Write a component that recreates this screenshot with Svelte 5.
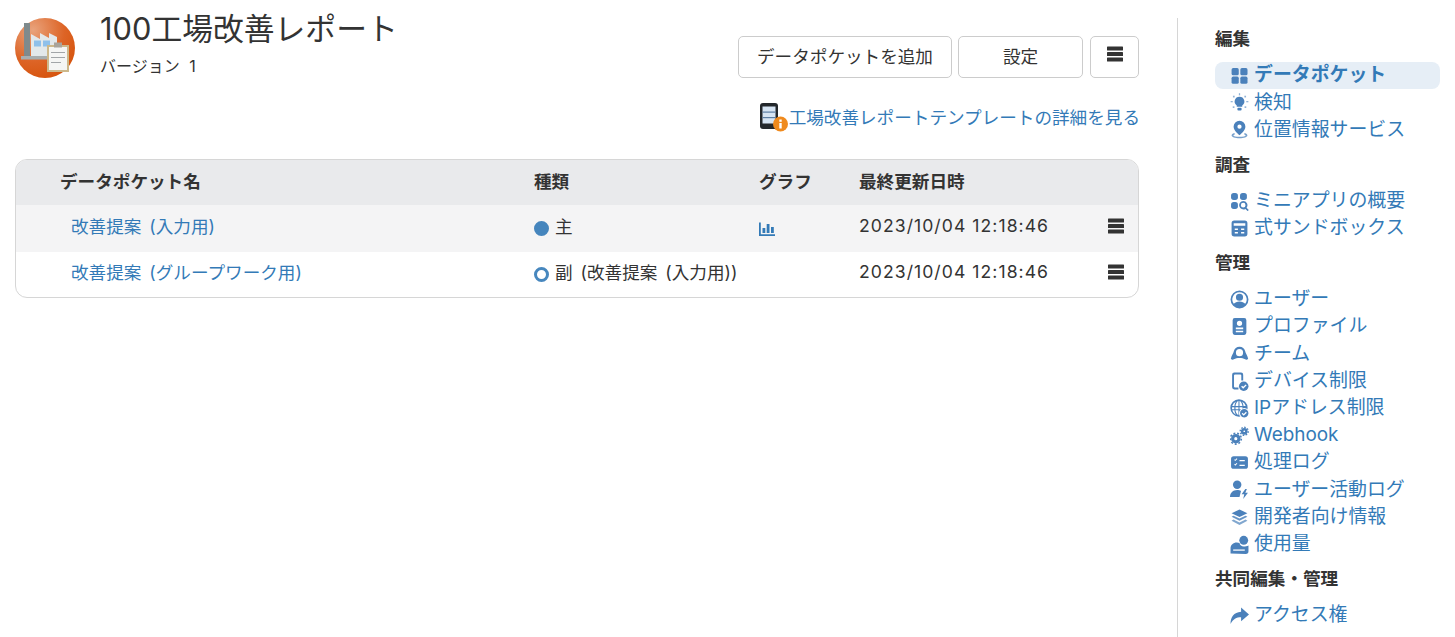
<script lang="ts">
	interface NavItem {
		label: string;
		icon: string;
		active?: boolean;
	}

	const sections: { title: string; items: NavItem[] }[] = [
		{
			title: '編集',
			items: [
				{ label: 'データポケット', icon: 'grid', active: true },
				{ label: '検知', icon: 'bulb' },
				{ label: '位置情報サービス', icon: 'pin' }
			]
		},
		{
			title: '調査',
			items: [
				{ label: 'ミニアプリの概要', icon: 'search' },
				{ label: '式サンドボックス', icon: 'calc' }
			]
		},
		{
			title: '管理',
			items: [
				{ label: 'ユーザー', icon: 'user' },
				{ label: 'プロファイル', icon: 'profile' },
				{ label: 'チーム', icon: 'team' },
				{ label: 'デバイス制限', icon: 'device' },
				{ label: 'IPアドレス制限', icon: 'globe' },
				{ label: 'Webhook', icon: 'gears' },
				{ label: '処理ログ', icon: 'log' },
				{ label: 'ユーザー活動ログ', icon: 'activity' },
				{ label: '開発者向け情報', icon: 'layers' },
				{ label: '使用量', icon: 'usage' }
			]
		},
		{
			title: '共同編集・管理',
			items: [{ label: 'アクセス権', icon: 'share' }]
		}
	];

	const icons: Record<string, string> = {
		grid: '<rect x="1.500" y="2" width="6.800" height="6.800" rx="1.500"/><rect x="9.800" y="2" width="6.800" height="6.800" rx="1.500"/><rect x="1.500" y="10" width="6.800" height="6.800" rx="1.500"/><rect x="9.800" y="10" width="6.800" height="6.800" rx="1.500"/>',
		bulb: '<path d="M9 3.500a4.600 4.600 0 0 0-2.600 8.400V13h5.200v-1.100A4.600 4.600 0 0 0 9 3.500z"/><rect x="7" y="14" width="4" height="2.600" rx="1"/><g opacity=".6"><rect x="8.400" y=".2" width="1.200" height="2"/><rect x=".6" y="7.600" width="2" height="1.200"/><rect x="15.400" y="7.600" width="2" height="1.200"/><rect x="2.800" y="2.600" width="1.600" height="1.600"/><rect x="13.600" y="2.600" width="1.600" height="1.600"/><rect x="2.600" y="12.600" width="1.600" height="1.600"/><rect x="13.800" y="12.600" width="1.600" height="1.600"/></g>',
		pin: '<path fill-rule="evenodd" d="M9 .8a5.600 5.600 0 0 0-5.600 5.600C3.400 10 9 14.500 9 14.500s5.600-4.500 5.600-8.100A5.600 5.600 0 0 0 9 .8zm0 3.500a2 2 0 1 1 0 4 2 2 0 0 1 0-4z"/><path d="M4 12.400C2.400 13 1.500 13.800 1.500 14.600c0 1.500 3.300 2.600 7.500 2.600s7.500-1.100 7.500-2.600c0-.8-.9-1.600-2.500-2.200l-.8 1c1 .4 1.600.8 1.600 1.200 0 .7-2.500 1.300-5.800 1.300s-5.800-.6-5.800-1.300c0-.4.600-.8 1.600-1.200z" opacity=".75"/>',
		search: '<rect x="1" y="1" width="6.500" height="6.500" rx="2.500"/><rect x="9.500" y="1" width="6.500" height="6.500" rx="2.500"/><rect x="1" y="9.500" width="6.500" height="6.500" rx="2.500"/><path fill-rule="evenodd" d="M12.500 8.500a4 4 0 0 1 3.200 6.400l2.100 2.100-1.100 1.100-2.100-2.100a4 4 0 1 1-2.100-7.500zm0 1.800a2.200 2.200 0 1 0 0 4.400 2.200 2.200 0 0 0 0-4.400z"/>',
		calc: '<path fill-rule="evenodd" d="M4 1.500h10A2.500 2.500 0 0 1 16.500 4v10a2.500 2.500 0 0 1-2.500 2.500H4A2.500 2.500 0 0 1 1.500 14V4A2.500 2.500 0 0 1 4 1.500zM3.500 4v2.500h11V4zm1 5v1.500h3V9zm6 0v1.500h3V9zm-6 3.200v1.500h3v-1.500zm6 0v1.500h3v-1.500z"/>',
		user: '<path fill-rule="evenodd" d="M9 .5a8.500 8.500 0 1 1 0 17 8.500 8.500 0 0 1 0-17zm0 1.700a6.800 6.800 0 0 0-5.400 10.900c1-1.400 3.100-2.300 5.400-2.300s4.400.9 5.400 2.300A6.800 6.800 0 0 0 9 2.200zm0 1.300a3.400 3.400 0 1 1 0 6.800 3.400 3.400 0 0 1 0-6.800z"/>',
		profile: '<path fill-rule="evenodd" d="M4.500 1h9a2 2 0 0 1 2 2v12a2 2 0 0 1-2 2h-9a2 2 0 0 1-2-2V3a2 2 0 0 1 2-2zM9 3.500a2.500 2.500 0 1 0 0 5 2.500 2.500 0 0 0 0-5zM5.500 10v1.600h7V10zm0 3v1.500h7V13z"/>',
		team: '<path fill-rule="evenodd" d="M9 2.500a5.500 5.500 0 0 1 5.300 4.200c.4 2 2.300 4.400 2.900 7.300-.8 1-2 1-2.900.5C13 13.700 11 13.200 9 13.200s-4 .5-5.300 1.300c-.9.5-2.100.5-2.900-.5.600-2.900 2.500-5.300 2.900-7.300A5.500 5.500 0 0 1 9 2.500zm0 2.300a3.400 3.400 0 1 0 0 6.800 3.400 3.400 0 0 0 0-6.800z"/>',
		device: '<path fill-rule="evenodd" d="M4 .5h6.500a2 2 0 0 1 2 2V8h-1.800V3.300a1 1 0 0 0-1-1H4.800a1 1 0 0 0-1 1v10.400a1 1 0 0 0 1 1H8v1.800H4a2 2 0 0 1-2-2V2.500a2 2 0 0 1 2-2z"/><circle cx="13" cy="13.500" r="4.500"/><path d="M11 13.500l1.500 1.500 2.800-2.800" fill="none" stroke="#fff" stroke-width="1.300"/>',
		globe: '<path fill-rule="evenodd" d="M8.500.3a8.200 8.200 0 1 1 0 16.400A8.200 8.200 0 0 1 8.500.3zM8 1.900c-1.400.4-2.500 2.300-2.800 4.700H8zm1 0v4.700h2.800C11.500 4.200 10.400 2.300 9 1.900zM4.200 6.600c.2-1.900.8-3.400 1.700-4.300a6.600 6.600 0 0 0-3.800 4.300zm8.600 0h2.100a6.600 6.600 0 0 0-3.800-4.300c.9.900 1.500 2.400 1.700 4.300zM2 7.700a7 7 0 0 0 0 1.900h2.100V7.700zm3.200 0v1.900H8V7.700zm3.800 0v1.900h2.800V7.700zm-6.800 3c.6 2 2 3.500 3.700 4.300-.9-.9-1.500-2.500-1.700-4.300zm3 0c.3 2.300 1.400 4 2.800 4.500v-4.500z"/><circle cx="13.500" cy="13.500" r="4.500" stroke="#fff"/><path d="M11.500 13.500l1.500 1.500 2.500-2.500" fill="none" stroke="#fff" stroke-width="1.200"/>',
		gears: '<circle cx="5.500" cy="12" r="3" fill="none" stroke="currentColor" stroke-width="3"/><circle cx="5.500" cy="12" r="5.200" fill="none" stroke="currentColor" stroke-width="1.500" stroke-dasharray="1.800 1.800"/><circle cx="13.500" cy="5" r="2" fill="none" stroke="currentColor" stroke-width="2.400"/><circle cx="13.500" cy="5" r="3.800" fill="none" stroke="currentColor" stroke-width="1.300" stroke-dasharray="1.500 1.400"/>',
		log: '<path fill-rule="evenodd" d="M3.500 3h11A2.500 2.500 0 0 1 17 5.500v7a2.500 2.500 0 0 1-2.500 2.500h-11A2.500 2.500 0 0 1 1 12.500v-7A2.500 2.500 0 0 1 3.500 3zM4 6.600l1 1 2-2-.7-.6L5 6.300l-.4-.4zm5 0v1.200h5V6.600zm-5 4.400l1 1 2-2-.7-.6L5 10.700l-.4-.4zm5 .1v1.200h5v-1.200z"/>',
		activity: '<circle cx="6.800" cy="4.500" r="4"/><path d="M0 16c0-3.800 2.800-6.500 6.800-6.500 1.400 0 2.700.4 3.600 1L9 16z"/><path d="M14.500 8.500l-3.500 5h2.500l-1 4.500 4.500-6h-2.500l1.500-3.500z"/>',
		layers: '<path d="M9 1.500l7.500 3.500L9 8.500 1.500 5z"/><path d="M3.300 7.300L9 10l5.700-2.700 1.800 1L9 12 1.500 8.300z" opacity=".85"/><path d="M3.300 11L9 13.700l5.700-2.700 1.800 1L9 16 1.500 12z" opacity=".7"/>',
		usage: '<circle cx="13" cy="5" r="4.200"/><path d="M.5 17.500v-5C.5 9.500 3 7 6.500 7c1 0 1.800.2 2.500.6.300 2 2 3.400 4 3.400 1.500 0 3.200-.3 4.500-1v5.500a2.500 2.500 0 0 1-2.500 2.500z"/><rect x="3" y="13.700" width="11" height="1.200" fill="#fff"/>',
		share: '<path d="M10.500 1.500l7.500 6.500-7.500 6.500v-3.800C6 10.700 3 12.500.5 17c0-6.500 3-11 10-11.600z"/>'
	};

	const pockets = [
		{ name: '改善提案 (入力用)', main: true, kind: '主', graph: true },
		{ name: '改善提案 (グループワーク用)', main: false, kind: '副 (改善提案 (入力用))', graph: false }
	];
</script>

{#snippet bars()}
	<svg class="bars" viewBox="0 0 16 16" aria-hidden="true">
		<rect y="0.5" width="16" height="4" rx="0.6" />
		<rect y="6" width="16" height="4" rx="0.6" />
		<rect y="11.5" width="16" height="4" rx="0.6" />
	</svg>
{/snippet}

<div class="page">
	<main>
		<header>
			<svg class="logo" viewBox="0 0 60 60" aria-hidden="true">
				<defs>
					<radialGradient id="disc" cx="0.3" cy="0.2" r="0.95">
						<stop offset="0" stop-color="#e9a37c" />
						<stop offset="0.55" stop-color="#dd6426" />
						<stop offset="1" stop-color="#d44f06" />
					</radialGradient>
				</defs>
				<circle cx="30" cy="30" r="30" fill="url(#disc)" />
				<rect x="9" y="5" width="6" height="34" fill="#7f8a8c" />
				<path d="M16 38V16l9 5v-6l9 5v-5l8 4v19z" fill="#e3e8ea" />
				<rect x="19" y="22.500" width="7" height="6" fill="#8fc0ea" />
				<rect x="28" y="22.500" width="7" height="6" fill="#8fc0ea" />
				<rect x="6" y="38" width="36" height="3.500" fill="#a8aeaf" />
				<rect x="32" y="27" width="22" height="27" fill="#cdb88a" />
				<rect x="34" y="29" width="18" height="23" fill="#f5f6f4" />
				<rect x="39" y="24.500" width="8" height="5" fill="#a9a49a" />
				<rect x="36" y="34" width="14" height="1" fill="#a2a6a8" />
				<rect x="36" y="39" width="14" height="1" fill="#a2a6a8" />
				<rect x="36" y="44" width="10" height="1" fill="#a2a6a8" />
			</svg>
			<div class="titles">
				<h1>100工場改善レポート</h1>
				<p>バージョン 1</p>
			</div>
			<div class="actions">
				<button class="add">データポケットを追加</button>
				<button class="settings">設定</button>
				<button class="more" aria-label="メニュー">{@render bars()}</button>
			</div>
		</header>

		<div class="template-link">
			<svg class="tablet" viewBox="0 0 30 30" aria-hidden="true">
				<rect x="1" y="1" width="18" height="26" rx="3" fill="#23272b" />
				<rect x="3.500" y="4.500" width="13" height="17" fill="#d6e4f3" />
				<rect x="3.500" y="9.500" width="13" height="1.200" fill="#5c7ea3" />
				<rect x="3.500" y="15" width="13" height="1.200" fill="#5c7ea3" />
				<circle cx="21.500" cy="22" r="7.500" fill="#f08a1d" />
				<rect x="20.300" y="21" width="2.400" height="5.500" fill="#fff" />
				<rect x="20.300" y="17.500" width="2.400" height="2.300" fill="#fff" />
			</svg>
			<a href="#template">工場改善レポートテンプレートの詳細を見る</a>
		</div>

		<div class="pockets">
			<div class="row head">
				<div class="name">データポケット名</div>
				<div>種類</div>
				<div>グラフ</div>
				<div>最終更新日時</div>
				<div></div>
			</div>
			{#each pockets as pocket}
				<div class="row">
					<div class="name"><a href="#pocket">{pocket.name}</a></div>
					<div class="kind">
						<span class="dot" class:main={pocket.main}></span>
						<span>{pocket.kind}</span>
					</div>
					<div>
						{#if pocket.graph}
							<svg class="graph" viewBox="0 0 16 16" aria-hidden="true">
								<path d="M0 1.500h1.800v11.700H16V15H0z" />
								<rect x="3.500" y="7" width="2.800" height="5" />
								<rect x="7.700" y="3" width="2.800" height="9" />
								<rect x="12" y="6" width="2.800" height="6" />
							</svg>
						{/if}
					</div>
					<div class="date">2023/10/04 12:18:46</div>
					<div class="menu">{@render bars()}</div>
				</div>
			{/each}
		</div>
	</main>

	<aside>
		{#each sections as section}
			<h2>{section.title}</h2>
			<ul>
				{#each section.items as item}
					<li class:active={item.active}>
						<svg viewBox="0 0 18 18" aria-hidden="true">{@html icons[item.icon]}</svg>
						<a href="#nav">{item.label}</a>
					</li>
				{/each}
			</ul>
		{/each}
	</aside>
</div>

<style>
	:global(body) {
		font-family: Inter, 'Noto Sans CJK JP', sans-serif;
		font-size: 17.6px;
		color: #333;
		background: #fff;
	}

	a {
		color: #337ab7;
		text-decoration: none;
	}

	.page {
		display: flex;
		height: 637px;
		overflow: hidden;
	}

	main {
		width: 1124px;
		margin-left: 15px;
		flex: none;
	}

	header {
		display: flex;
		align-items: flex-start;
		padding-top: 18px;
		height: 60px;
	}

	.logo {
		width: 60px;
		height: 60px;
		flex: none;
	}

	.titles {
		margin-left: 25px;
		margin-top: -9px;
	}

	h1 {
		margin: 0;
		font-size: 30.8px;
		font-weight: 400;
		line-height: 40px;
	}

	.titles p {
		margin: 6px 0 0;
		font-size: 16px;
		line-height: 22px;
		word-spacing: 5px;
	}

	.actions {
		margin-left: auto;
		margin-top: 18px;
		display: flex;
		gap: 6px;
	}

	button {
		height: 42px;
		padding: 0 0 4px;
		display: flex;
		align-items: center;
		justify-content: center;
		font: inherit;
		color: #333;
		background: #fff;
		border: 1px solid #ccc;
		border-radius: 5px;
	}

	.add {
		width: 214px;
	}

	.settings {
		width: 125px;
	}

	.more {
		width: 49px;
		margin-left: 1px;
		padding-bottom: 6px;
	}

	.bars {
		width: 16px;
		height: 16px;
		display: block;
		fill: #333;
	}

	.template-link {
		margin-top: 24px;
		margin-right: -1px;
		height: 30px;
		display: flex;
		justify-content: flex-end;
		align-items: center;
	}

	.template-link a {
		margin-bottom: 2px;
	}

	.tablet {
		width: 30px;
		height: 30px;
		flex: none;
	}

	.pockets {
		margin-top: 27px;
		border: 1px solid #d6d6d6;
		border-radius: 12px;
		overflow: hidden;
		word-spacing: 3px;
	}

	.row {
		display: grid;
		grid-template-columns: 518px 225px 100px 1fr 46px;
		height: 45px;
		align-items: center;
	}

	.row:nth-child(2) {
		height: 47px;
		background: #f4f4f5;
	}

	.head {
		background: #e9eaec;
		font-weight: 700;
	}

	.head > div {
		padding-bottom: 4px;
	}

	.head .name {
		padding-left: 44px;
	}

	.name {
		padding-left: 55px;
		padding-bottom: 6px;
	}

	.kind {
		display: flex;
		align-items: center;
		gap: 6px;
		white-space: nowrap;
	}

	.kind span:last-child {
		padding-bottom: 6px;
	}

	.dot {
		width: 15px;
		height: 15px;
		box-sizing: border-box;
		border-radius: 50%;
		border: 3px solid #337ab7;
		opacity: 0.9;
	}

	.dot.main {
		background: #337ab7;
	}

	.graph {
		width: 16px;
		height: 16px;
		display: block;
		fill: #337ab7;
	}

	.date {
		padding-bottom: 6px;
		letter-spacing: 1.05px;
		word-spacing: 0;
		white-space: nowrap;
	}

	.menu {
		justify-self: start;
		margin-left: 16px;
		margin-top: -6px;
	}

	aside {
		margin-left: 38px;
		border-left: 1px solid #d6d6d6;
		margin-top: 18px;
		padding-left: 37px;
		width: 225px;
		flex: none;
		font-size: 18.9px;
	}

	h2 {
		margin: 0;
		height: 36px;
		font-size: 17.6px;
		font-weight: 700;
		line-height: 41px;
	}

	ul {
		list-style: none;
		margin: 8px 0 0;
		padding: 0;
	}

	li {
		height: 27.2px;
		padding-left: 15px;
		display: flex;
		align-items: center;
		gap: 5px;
		border-radius: 8px;
		line-height: 27px;
	}

	li a {
		padding-bottom: 1.500px;
	}

	li svg {
		width: 19px;
		height: 19px;
		flex: none;
		fill: #4b81bb;
		color: #4b81bb;
	}

	li.active {
		background: #e6eef6;
	}

	li.active a {
		font-weight: 700;
	}
</style>
